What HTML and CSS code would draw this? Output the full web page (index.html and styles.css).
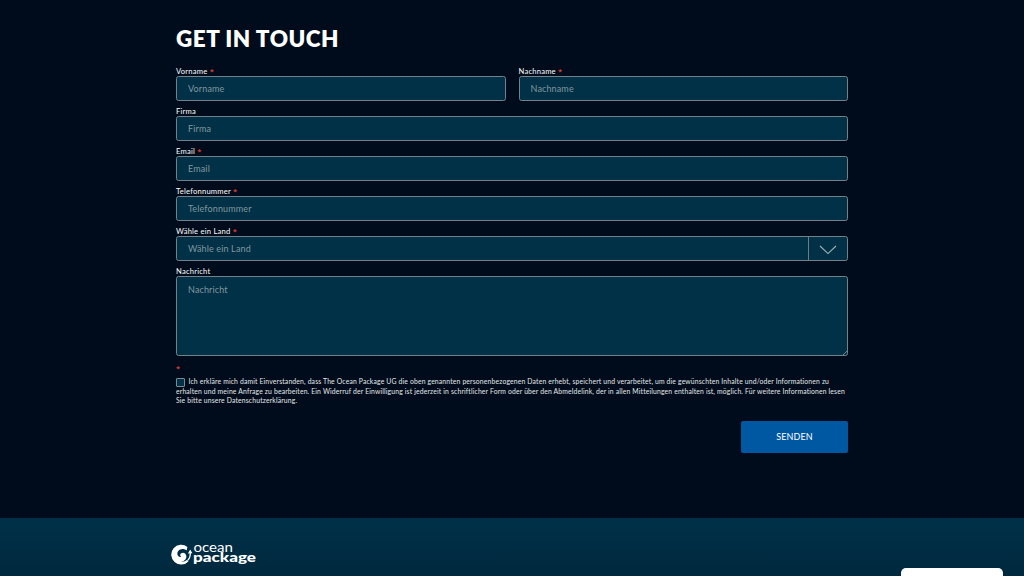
FILE: index.html
```html
<!DOCTYPE html>
<html lang="de">
<head>
	<meta charset="utf-8">
	<title>Ocean Package - Kontakt</title>
	<link rel="stylesheet" href="styles.css">
</head>
<body>
	<main class="contact">
		<h1>GET IN TOUCH</h1>
		<form class="form">
			<div class="row">
				<div class="field">
					<label for="vorname">Vorname <i>*</i></label>
					<input id="vorname" type="text" placeholder="Vorname">
				</div>
				<div class="field">
					<label for="nachname">Nachname <i>*</i></label>
					<input id="nachname" type="text" placeholder="Nachname">
				</div>
			</div>
			<div class="field">
				<label for="firma">Firma</label>
				<input id="firma" type="text" placeholder="Firma">
			</div>
			<div class="field">
				<label for="email">Email <i>*</i></label>
				<input id="email" type="email" placeholder="Email">
			</div>
			<div class="field">
				<label for="telefon">Telefonnummer <i>*</i></label>
				<input id="telefon" type="tel" placeholder="Telefonnummer">
			</div>
			<div class="field">
				<label>Wähle ein Land <i>*</i></label>
				<div class="select">
					<span class="select-value">Wähle ein Land</span>
					<span class="select-arrow">
						<svg width="18" height="10" viewBox="0 0 18 10"><path d="M1 1l8 7.6L17 1"/></svg>
					</span>
				</div>
			</div>
			<div class="field message">
				<label for="nachricht">Nachricht</label>
				<textarea id="nachricht" placeholder="Nachricht"></textarea>
			</div>
			<div class="required">*</div>
			<div class="consent">
				<div class="line first"><input type="checkbox" class="check"><span>Ich erkläre mich damit Einverstanden, dass The Ocean Package UG die oben genannten personenbezogenen Daten erhebt, speichert und verarbeitet, um die gewünschten Inhalte und/oder Informationen zu</span></div>
				<div class="line">erhalten und meine Anfrage zu bearbeiten. Ein Widerruf der Einwilligung ist jederzeit in schriftlicher Form oder über den Abmeldelink, der in allen Mitteilungen enthalten ist, möglich. Für weitere Informationen lesen</div>
				<div class="line">Sie bitte unsere Datenschutzerklärung.</div>
			</div>
			<button type="button" class="send">SENDEN</button>
		</form>
	</main>
	<footer class="footer">
		<svg class="logo" width="88" height="32" viewBox="0 -6 88 32">
			<!-- wave ring -->
			<path d="M17.4 6A9.9 9.9 0 1 0 18.4 20.4L17.2 18.8A7 7 0 0 1 11 20.7C14.8 20.3 16.8 17.6 16.3 14.8C15.8 12.2 13.2 11 11.2 12.3C9.8 13.2 9.9 15 11.3 15.6C10.2 16.4 8.3 15.6 7.6 13.9C6.8 11.8 8 9.5 10.1 8.5C12.4 7.4 15 7.9 16.7 9.4Z"/>
			<!-- arrow -->
			<path d="M17.7 19.4Q20.6 16.5 20.3 12" class="arrow"/>
			<path d="M17.9 12.4l2.3-3.8 2.2 3.7z"/>
			<text class="ocean" x="23.5" y="11.3" textLength="39.5" lengthAdjust="spacingAndGlyphs">ocean</text>
			<text class="package" x="23" y="20.6" textLength="63" lengthAdjust="spacingAndGlyphs">package</text>
		</svg>
	</footer>
	<div class="chat"></div>
</body>
</html>
```
FILE: styles.css
```css
* {
	box-sizing: border-box;
}
body {
	margin: 0;
	height: 576px;
	overflow: hidden;
	display: flex;
	flex-direction: column;
	background-color: #000c1b;
	color: #fff;
	font-family: Lato, "Noto Sans", sans-serif;
}
.contact {
	width: 672px;
	height: 518px;
	flex: none;
	margin: 0 auto;
	padding-top: 25px;
}
h1 {
	margin: 0;
	height: 41px;
	font-size: 22.5px;
	line-height: 28px;
	font-weight: 800;
	letter-spacing: .5px;
}
.row {
	display: flex;
	gap: 13px;
}
.field {
	flex: 1;
	height: 40px;
}
label {
	display: block;
	height: 10px;
	font-size: 7.6px;
	line-height: 11px;
	letter-spacing: .22px;
}
label i, .required {
	color: #e0403c;
	font-family: "Open Sans", sans-serif;
	font-style: normal;
	font-weight: 600;
}
.field input, .select, textarea {
	display: block;
	width: 100%;
	height: 25px;
	padding: 0 11px;
	border: 1px solid #74808a;
	border-radius: 2.5px;
	background-color: #003146;
	color: #83969f;
	font-family: inherit;
	font-size: 9px;
	letter-spacing: .14px;
}
::placeholder {
	color: #83969f;
}
.select {
	display: flex;
	line-height: 23px;
	padding-right: 0;
}
.select-value {
	flex: 1;
}
.select-arrow {
	width: 39px;
	display: flex;
	align-items: center;
	justify-content: center;
	border-left: 1px solid #6d7b84;
}
.select-arrow svg {
	fill: none;
	stroke: #a3b2b9;
	stroke-width: 1.1;
	margin-top: 2px;
}
.message {
	height: 91px;
}
textarea {
	height: 80px;
	padding-top: 7px;
}
textarea::-webkit-resizer {
	background: linear-gradient(135deg, transparent 50%, #74808a 50%, #74808a 62%, transparent 62%) right bottom / 4px 4px no-repeat;
}
.required {
	margin-top: 6px;
	font-size: 7.5px;
	line-height: 10px;
}
.consent {
	margin-top: 4px;
	font-size: 6.8px;
	line-height: 9px;
	letter-spacing: .16px;
	color: #e4e7ea;
}
.line {
	white-space: nowrap;
}
.first {
	display: flex;
}
.check {
	flex: none;
	appearance: none;
	width: 9px;
	height: 9px;
	margin: 1px 3.5px 0 0;
	border: 1px solid #7b8b94;
	border-radius: 1px;
	background-color: #003146;
}
.send {
	display: block;
	width: 107px;
	height: 32px;
	margin: 16px 0 0 auto;
	padding: 0 0 1px;
	border: 0;
	border-radius: 2px;
	background-color: #0057a2;
	color: #fff;
	font-family: inherit;
	font-size: 9px;
	letter-spacing: .1px;
}
.footer {
	flex: 1;
	padding: 17px 170px 0;
	background: linear-gradient(#003148, #00283e);
}
.logo {
	display: block;
	font-family: Lato, sans-serif;
	fill: #fff;
}
.arrow {
	fill: none;
	stroke: #fff;
	stroke-width: 1.2;
}
.ocean {
	font-size: 14px;
}
.package {
	font-size: 14px;
	font-weight: 900;
}
.chat {
	position: fixed;
	right: 21px;
	bottom: 0;
	width: 102px;
	height: 8px;
	border-radius: 5px 5px 0 0;
	background-color: #fff;
}
```
